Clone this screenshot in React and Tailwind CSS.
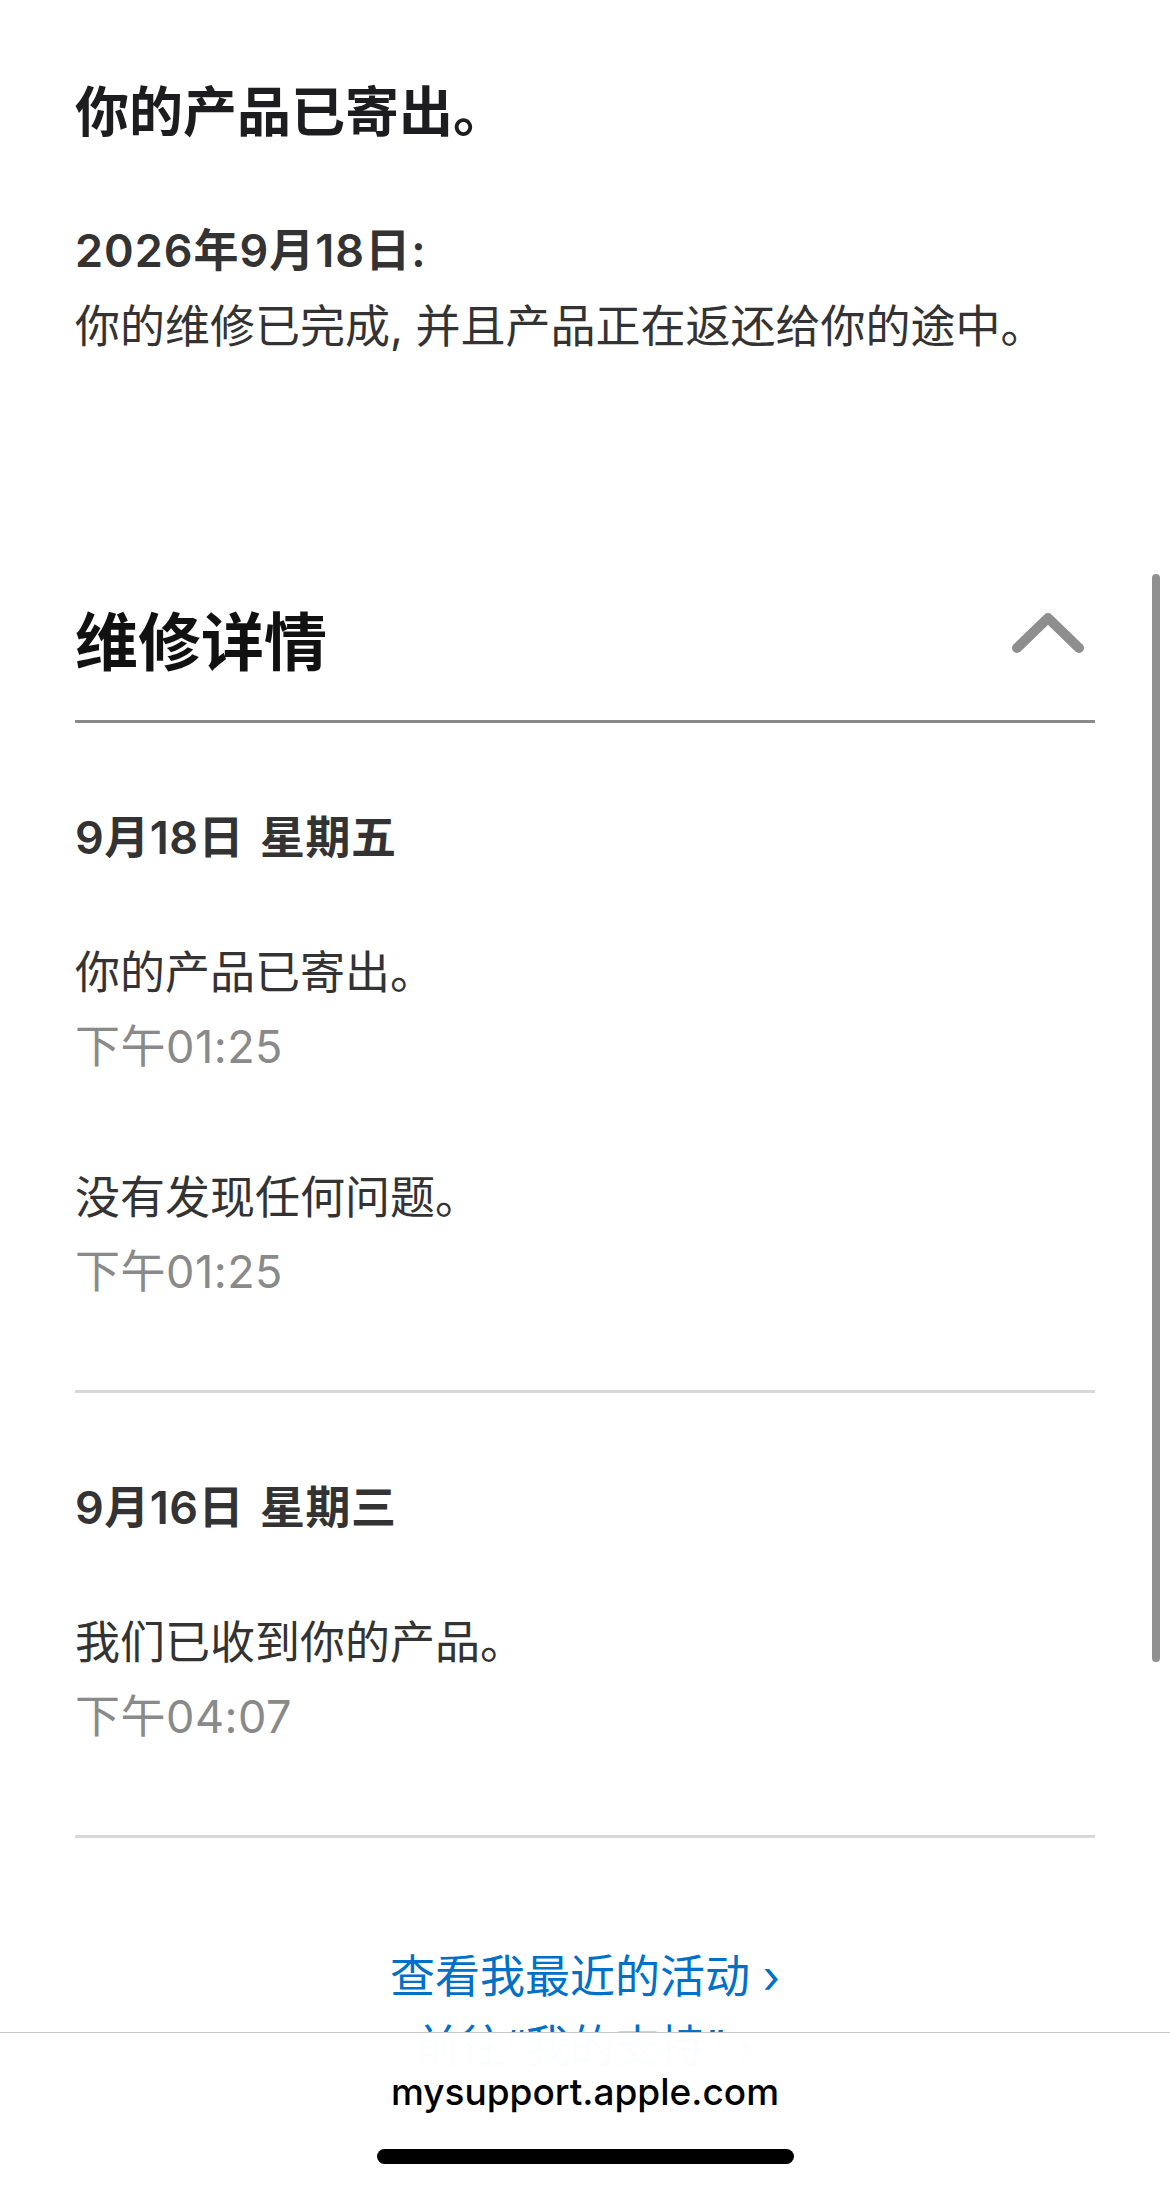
import React from 'react';

const days = [
  {
    date: '9月18日 星期五',
    events: [
      { text: '你的产品已寄出。', time: '下午01:25' },
      { text: '没有发现任何问题。', time: '下午01:25' },
    ],
  },
  {
    date: '9月16日 星期三',
    events: [{ text: '我们已收到你的产品。', time: '下午04:07' }],
  },
];

const ChevronUp = () => (
  <svg width="74" height="42" viewBox="0 0 74 42" fill="none">
    <path d="M6 36 L37 6 L68 36" stroke="#8e8e8e" strokeWidth="10" strokeLinecap="round" strokeLinejoin="round" />
  </svg>
);

export default function App() {
  return (
    <div className="relative h-[2188px] overflow-hidden bg-white font-['Inter','Noto_Sans_CJK_SC',sans-serif]">
      <div className="px-[75px] pt-[81px]">
        {/* status summary */}
        <h1 className="text-[54px] leading-[64px] font-bold text-[#1d1d1f]">你的产品已寄出。</h1>
        <div className="mt-[68px] text-[45px] leading-[76px] text-[#333]">
          <p className="font-semibold tracking-[1px]">2026年9月18日:</p>
          <p>你的维修已完成, 并且产品正在返还给你的途中。</p>
        </div>

        {/* repair details header */}
        <div className="mt-[239px] flex items-center justify-between border-b-[3px] border-[#8a8a8a] pb-[40px]">
          <h2 className="text-[63px] leading-[76px] font-bold text-[#111]">维修详情</h2>
          <div className="mr-[10px] -mt-[18px]">
            <ChevronUp />
          </div>
        </div>

        {days.map((day) => (
          <div key={day.date} className="border-b-[3px] border-[#d8d8d8] pt-[83px] pb-[81px]">
            <p className="text-[45px] leading-[64px] font-semibold text-[#333] tracking-[0.5px] [word-spacing:4px]">{day.date}</p>
            <div className="mt-[66px] flex flex-col gap-[77px]">
              {day.events.map((ev, i) => (
                <div key={i} className="text-[45px] leading-[74px]">
                  <p className="text-[#333]">{ev.text}</p>
                  <p className="text-[#8a8a8a] tracking-[0.5px]">{ev.time}</p>
                </div>
              ))}
            </div>
          </div>
        ))}

        <div className="mt-[107px] flex flex-col items-center text-[45px] leading-[64px] text-[#0070c9]">
          <p>查看我最近的活动 ›</p>
          <p className="mt-[6px]">前往“我的支持” ›</p>
        </div>
      </div>

      {/* scroll indicator */}
      <div className="absolute left-[1152px] top-[574px] h-[1088px] w-[8px] rounded-full bg-[#909090]" />

      {/* safari bottom bar */}
      <div className="absolute inset-x-0 bottom-0 h-[156px] border-t border-[#c8c8c8] bg-white/[0.99]">
        <div className="flex h-full flex-col items-center">
          <p className="mt-[36px] text-[37px] leading-[46px] font-medium text-black">mysupport.apple.com</p>
          <div className="mt-[34px] h-[15px] w-[417px] rounded-full bg-black" />
        </div>
      </div>
    </div>
  );
}
